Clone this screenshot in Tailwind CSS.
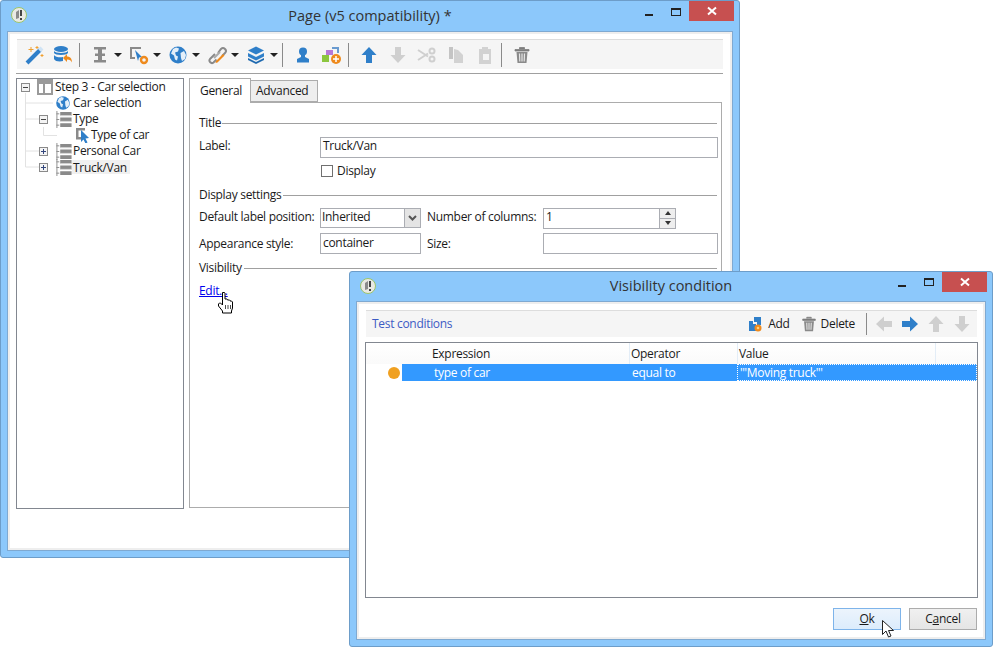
<!DOCTYPE html>
<html lang="en">
  <head>
    <meta charset="UTF-8" />
    <title>Page (v5 compatibility)</title>
    <script src="https://cdn.jsdelivr.net/npm/@tailwindcss/browser@4"></script>
  </head>
  <body class="bg-white">
    <svg class="absolute w-0 h-0">
      <symbol id="app" viewBox="0 0 16 16">
        <circle cx="8" cy="8" r="7.5" fill="#e9e9e4" stroke="#9cc56a" />
        <path d="M5 5l3-2v8l-3 1z" fill="#8a8a8a" />
        <path d="M9 3h2v6H9zM9 11h2v2H9z" fill="#444" />
      </symbol>
      <symbol id="globe" viewBox="0 0 20 20">
        <circle cx="10" cy="10" r="8.500" fill="#2f7fc9" />
        <path d="M5 4l3-1.500 3 1-1 3-3 1 1 3 2 1-1 4-2-1-1-4-3-2zM12.500 8l3.500-2 2 4-1 4-3 2-1-3z" fill="#e4eff9" />
      </symbol>
      <symbol id="rows" viewBox="0 0 18 18">
        <path d="M1.500 0v18M1 3h3M1 9h3M1 15h3" stroke="#8a8a8a" fill="none" />
        <path d="M5 1h12v4H5zM5 7h12v4H5zM5 13h12v4H5z" fill="#8a8a8a" />
        <path d="M5 5h12M5 11h12" stroke="#ddd" />
      </symbol>
      <symbol id="down" viewBox="0 0 20 20">
        <path d="M7 2h6v8h4.500L10 18l-7.500-8H7z" fill="currentColor" />
      </symbol>
      <symbol id="up" viewBox="0 0 20 20">
        <path d="M7 18h6v-8h4.500L10 2l-7.500 8H7z" fill="currentColor" />
      </symbol>
      <symbol id="left" viewBox="0 0 20 20">
        <path d="M18 7v6h-8v4.500L2 10l8-7.500V7z" fill="currentColor" />
      </symbol>
      <symbol id="right" viewBox="0 0 20 20">
        <path d="M2 7v6h8v4.500L18 10l-8-7.500V7z" fill="currentColor" />
      </symbol>
      <symbol id="trash" viewBox="0 0 20 20">
        <path d="M7.500 4V2.500h5V4M3 4.500h14V6H3z" fill="#7d7d7d" stroke="#7d7d7d" stroke-width=".8" />
        <path d="M4.500 7h11l-1 11h-9z" fill="#8a8a8a" />
        <path d="M7.500 8.500l.3 8M10 8.500v8M12.500 8.500l-.3 8" stroke="#e6e6e6" stroke-width="1.200" />
      </symbol>
      <symbol id="close" viewBox="0 0 10 10">
        <path d="M1 1.500l8 7M9 1.500l-8 7" stroke="#fff" stroke-width="2" />
      </symbol>
    </svg>

    <div class="relative w-[994px] h-[647px] overflow-hidden bg-white text-[12px] leading-4 tracking-[-0.3px] text-[#1a1a1a] font-['Open_Sans',sans-serif]">
      <!-- Main window -->
      <div class="absolute left-0 top-0 flex flex-col w-[740px] h-[558px] bg-[#8cc8fb] border border-[#6d9dc9] rounded-[3px]">
        <div class="grid grid-cols-[120px_1fr_120px] h-[30px] shrink-0">
          <div class="pl-[10px] pt-[6px]">
            <svg class="w-4 h-4"><use href="#app" /></svg>
          </div>
          <div class="pt-[3px] text-center text-[14.5px] tracking-normal leading-6 text-[#333]">Page (v5 compatibility) *</div>
          <div class="flex justify-end items-start">
            <div class="w-[8px] h-[2px] mt-[13px] mr-[18px] bg-[#222]"></div>
            <div class="w-[10px] h-[8px] mt-[7px] mr-[8px] border border-t-2 border-[#222]"></div>
            <div class="flex items-center justify-center w-[45px] h-[20px] mr-[5px] bg-[#c75050]">
              <svg class="w-[10px] h-[10px]"><use href="#close" /></svg>
            </div>
          </div>
        </div>
        <div class="flex-1 mx-[6px] mb-[6px] bg-white border border-[#7fa9d1] shadow-[inset_1px_1px_0_1px_#eee,inset_-1px_-1px_0_1px_#eee] pl-[9px] pr-[9px] pt-[7px]">
          <!-- Toolbar -->
          <div class="flex items-center h-[30px] pl-[8px] bg-[#f5f5f5] border-t border-[#ddd]">
            <svg class="w-5 h-5" viewBox="0 0 20 20"><path d="M2 18L15 5" stroke="#2f7fc9" stroke-width="4" /><path d="M14.500 5.500l2.500-2.500" stroke="#cfe3f5" stroke-width="4" /><path d="M6 2v5M3.500 4.500h5M12 1v3M10.500 2.500h3M17 9v3M15.500 10.500h3" stroke="#f0a030" /></svg>
            <svg class="w-5 h-5 ml-[8px]" viewBox="0 0 20 20"><ellipse cx="8" cy="4" rx="7" ry="3" fill="#2f7fc9" /><path d="M1 6c1 2.500 13 2.500 14 0v2c-1 2.500-13 2.500-14 0zM1 10c1 2.500 7 2.500 9 2v4c-3 1-8 .5-9-2z" fill="#2f7fc9" /><path d="M10 13l4-4v2.500c3 0 5 2 5 6-1-2-2-3-5-3V17z" fill="#ee8a1d" /></svg>
            <div class="w-px h-[24px] ml-[6px] bg-[#8a8a8a]"></div>
            <svg class="w-5 h-5 ml-[10px]" viewBox="0 0 20 20"><path d="M4 2h12v2.500h-4v4h3V11h-3v4h4v2.500H4V15h4v-4H5V8.500h3v-4H4z" fill="#8a8a8a" /></svg>
            <div class="w-0 h-0 ml-[4px] border-x-[4px] border-t-[4px] border-x-transparent border-t-[#222]"></div>
            <svg class="w-5 h-5 ml-[7px]" viewBox="0 0 20 20"><path d="M1 2h11v2H3v8h3v2H1z" fill="#8a8a8a" /><path d="M6 5l7 7-3 .5-1 3.500z" fill="#2f7fc9" /><circle cx="15" cy="15" r="3" fill="none" stroke="#ee8a1d" stroke-width="2.400" /></svg>
            <div class="w-0 h-0 ml-[4px] border-x-[4px] border-t-[4px] border-x-transparent border-t-[#222]"></div>
            <svg class="w-5 h-5 ml-[7px]"><use href="#globe" /></svg>
            <div class="w-0 h-0 ml-[4px] border-x-[4px] border-t-[4px] border-x-transparent border-t-[#222]"></div>
            <svg class="w-5 h-5 ml-[7px]" viewBox="0 0 20 20"><path d="M8 9l-5 5a2.500 2.500 0 0 0 3.500 3.500l3-3M11 8l3-4a2.500 2.500 0 0 1 4 4l-3 3" fill="none" stroke="#8a8a8a" stroke-width="2" /><path d="M7 13l6-6" stroke="#aaa" stroke-width="2" /><path d="M9 16l7-7 1.500 1.500-7 7-2 .5z" fill="#ee8a1d" /></svg>
            <div class="w-0 h-0 ml-[4px] border-x-[4px] border-t-[4px] border-x-transparent border-t-[#222]"></div>
            <svg class="w-5 h-5 ml-[7px]" viewBox="0 0 20 20"><path d="M10 1.500l8 4-8 4-8-4z" fill="#2f7fc9" /><path d="M2 8v3.500l8 4 8-4V8l-8 4z" fill="#2f7fc9" /><path d="M2 13v2l8 4 8-4v-2l-8 4z" fill="#1f6ab0" /></svg>
            <div class="w-0 h-0 ml-[4px] border-x-[4px] border-t-[4px] border-x-transparent border-t-[#222]"></div>
            <div class="w-px h-[24px] ml-[4px] bg-[#8a8a8a]"></div>
            <svg class="w-5 h-5 ml-[10px]" viewBox="0 0 20 20"><circle cx="10" cy="6.500" r="4" fill="#2f7fc9" /><path d="M8 10h4v2l4 2v3.500H4V14l4-2z" fill="#2f7fc9" /></svg>
            <svg class="w-5 h-5 ml-[8px]" viewBox="0 0 20 20"><path d="M5 5h7v5H5z" fill="#b678d8" /><path d="M11 2h7v6h-2V4h-5z" fill="#6a9bd0" /><path d="M1 10h7v7H1z" fill="#8cc63f" /><circle cx="15" cy="14" r="5" fill="#ee8a1d" /><path d="M15 11v6M12 14h6" stroke="#fff" stroke-width="1.500" /></svg>
            <div class="w-px h-[24px] ml-[7px] bg-[#8a8a8a]"></div>
            <svg class="w-5 h-5 ml-[10px] text-[#2f7fc9]"><use href="#up" /></svg>
            <svg class="w-5 h-5 ml-[9px] text-[#cfcfcf]"><use href="#down" /></svg>
            <svg class="w-5 h-5 ml-[9px]" viewBox="0 0 20 20"><path d="M1 5l10 6.500M1 15l10-6.500" stroke="#cfcfcf" stroke-width="2" /><circle cx="15" cy="6" r="2.500" fill="none" stroke="#cfcfcf" stroke-width="2" /><circle cx="15" cy="14" r="2.500" fill="none" stroke="#cfcfcf" stroke-width="2" /></svg>
            <svg class="w-5 h-5 ml-[9px]" viewBox="0 0 20 20"><path d="M3 2h4v12H3z" fill="#c4c4c4" /><path d="M8 4l4 1 5 5v8H8z" fill="#d2d2d2" /></svg>
            <svg class="w-5 h-5 ml-[9px]" viewBox="0 0 20 20"><path d="M4 4h3V2h6v2h3v15H4z" fill="#d2d2d2" /><path d="M8 9h6v6H8z" fill="#f5f5f5" /></svg>
            <div class="w-px h-[24px] ml-[6px] bg-[#8a8a8a]"></div>
            <svg class="w-5 h-5 ml-[10px]"><use href="#trash" /></svg>
          </div>
          <div class="h-px mt-[4px] -ml-px bg-[#a0a0a0]"></div>

          <div class="flex gap-[5px] mt-[4px] -ml-px">
            <!-- Tree -->
            <div class="relative w-[168px] h-[431px] bg-white border border-[#828790]">
              <svg class="absolute left-0 top-0 w-[60px] h-[100px]"><path d="M8.500 14v74M8.500 24H36M8.500 40H24M8.500 72H24M8.500 88H24M26.500 48v8.500H40" stroke="#e2e2e2" fill="none" /></svg>
              <div class="relative flex items-center h-4 pl-[4px]">
                <div class="flex items-center justify-center w-[9px] h-[9px] bg-[#f4f4f4] border border-[#8a8a8a]"><div class="w-[5px] h-px bg-[#444]"></div></div>
                <svg class="w-[16px] h-[16px] ml-[7px]" viewBox="0 0 16 16"><path d="M1 1h14v14H1z" fill="#fff" stroke="#9a9a9a" stroke-width="2" /><path d="M1 1h14v4H1zM6 5h2v10H6z" fill="#9a9a9a" /></svg>
                <span class="ml-[2px] whitespace-nowrap">Step 3 - Car selection</span>
              </div>
              <div class="relative flex items-center h-4 pl-[38px]">
                <svg class="w-4 h-4"><use href="#globe" /></svg>
                <span class="ml-[2px] whitespace-nowrap">Car selection</span>
              </div>
              <div class="relative flex items-center h-4 pl-[22px]">
                <div class="flex items-center justify-center w-[9px] h-[9px] bg-[#f4f4f4] border border-[#8a8a8a]"><div class="w-[5px] h-px bg-[#444]"></div></div>
                <svg class="w-[18px] h-[17px] ml-[7px]"><use href="#rows" /></svg>
                <span>Type</span>
              </div>
              <div class="relative flex items-center h-4 pl-[58px]">
                <svg class="w-4 h-4" viewBox="0 0 16 16"><path d="M1 1h9v2.500H3.500V10H6v2.500H1z" fill="#8a8a8a" /><path d="M6 3l8 8-3.500.5 2 4-2 1-2-4L6 15z" fill="#2f7fc9" /></svg>
                <span class="whitespace-nowrap">Type of car</span>
              </div>
              <div class="relative flex items-center h-4 pl-[22px]">
                <div class="relative flex items-center justify-center w-[9px] h-[9px] bg-[#f4f4f4] border border-[#8a8a8a]"><div class="w-[5px] h-px bg-[#33467c]"></div><div class="absolute w-px h-[5px] bg-[#33467c]"></div></div>
                <svg class="w-[18px] h-[17px] ml-[7px]"><use href="#rows" /></svg>
                <span class="whitespace-nowrap">Personal Car</span>
              </div>
              <div class="relative flex items-center h-4 pl-[22px]">
                <div class="relative flex items-center justify-center w-[9px] h-[9px] bg-[#f4f4f4] border border-[#8a8a8a]"><div class="w-[5px] h-px bg-[#33467c]"></div><div class="absolute w-px h-[5px] bg-[#33467c]"></div></div>
                <svg class="w-[18px] h-[17px] ml-[7px]"><use href="#rows" /></svg>
                <span class="-ml-px w-[58px] h-[14px] pl-px leading-[16px] bg-[#f0f0f0] whitespace-nowrap">Truck/Van</span>
              </div>
            </div>

            <!-- Tabs and form -->
            <div class="flex flex-col w-[533px] h-[430px]">
              <div class="flex items-end h-[24px] shrink-0">
                <div class="relative z-10 w-[62px] h-[25px] -mb-px pl-[10px] pt-[4px] bg-white border border-b-0 border-[#acacac]">General</div>
                <div class="w-[67px] h-[22px] pl-[5px] pt-[2px] bg-[#eee] border border-l-0 border-[#acacac]">Advanced</div>
              </div>
              <div class="flex-1 pl-[9px] pr-[3px] pt-[12px] border border-[#acacac]">
                <div class="flex items-center gap-[1px] h-4 mr-[1px]"><span>Title</span><div class="flex-1 h-px bg-[#a0a0a0]"></div></div>
                <div class="flex items-start mt-[6px] h-[21px]">
                  <span class="w-[121px] mt-px">Label:</span>
                  <div class="flex-1 h-full pl-[2px] leading-[16px] border border-[#abadb3]">Truck/Van</div>
                </div>
                <div class="flex items-start mt-[7px] h-[13px] pl-[122px]">
                  <div class="w-[12px] h-[12px] bg-white border border-[#707070]"></div>
                  <span class="ml-[4px] -mt-[2px]">Display</span>
                </div>
                <div class="flex items-center gap-[2px] h-4 mt-[9px] mr-[1px]"><span>Display settings</span><div class="flex-1 h-px bg-[#a0a0a0]"></div></div>
                <div class="grid grid-cols-[121px_101px_122px_175px] grid-rows-[20px_21px] gap-y-[5px] items-center mt-[5px]">
                  <span class="pb-[2px] whitespace-nowrap">Default label position:</span>
                  <div class="flex h-[20px] border border-[#abadb3]">
                    <span class="flex-1 pl-px leading-[16px]">Inherited</span>
                    <div class="flex items-center justify-center w-[16px] bg-[#e4e4e4] border-l border-[#abadb3]">
                      <svg class="w-[9px] h-[6px]" viewBox="0 0 9 6"><path d="M1 1l3.500 3.500L8 1" fill="none" stroke="#555" stroke-width="2" /></svg>
                    </div>
                  </div>
                  <span class="pl-[6px] pb-[2px] whitespace-nowrap">Number of columns:</span>
                  <div class="flex w-[133px] h-[21px] border border-[#abadb3]">
                    <span class="flex-1 pl-[2px] leading-[16px]">1</span>
                    <div class="flex flex-col w-[16px] bg-[#eee] border-l border-[#abadb3]">
                      <div class="flex flex-1 items-center justify-center border-b border-[#abadb3]"><div class="w-0 h-0 border-x-[3px] border-b-[4px] border-x-transparent border-b-[#333]"></div></div>
                      <div class="flex flex-1 items-center justify-center"><div class="w-0 h-0 border-x-[3px] border-t-[4px] border-x-transparent border-t-[#333]"></div></div>
                    </div>
                  </div>
                  <span>Appearance style:</span>
                  <div class="h-[21px] pl-[2px] leading-[17px] border border-[#abadb3]">container</div>
                  <span class="pl-[6px]">Size:</span>
                  <div class="h-[21px] border border-[#abadb3]"></div>
                </div>
                <div class="flex items-center gap-[2px] h-4 mt-[6px] mr-[1px]"><span>Visibility</span><div class="flex-1 h-px bg-[#a0a0a0]"></div></div>
                <a class="block w-fit mt-[7px] text-[#0000ee] underline" href="#">Edit...</a>
              </div>
            </div>
          </div>
        </div>
      </div>

      <!-- Hand cursor -->
      <svg class="absolute left-[216px] top-[291px] w-[20px] h-[24px]" viewBox="0 0 20 24"><path d="M6.500 1.500h2l.5.500v6h2l.5.500v.5h2l.5.500v.5h1.500l1 1v6l-1 3v2h-9v-2l-4-5v-2l1-1h1l2 2v-10z" fill="#fff" stroke="#000" /><path d="M9.500 14v4M12 14v4M14.500 14v4" stroke="#000" stroke-width=".7" /></svg>

      <!-- Visibility condition dialog -->
      <div class="absolute left-[349px] top-[271px] flex flex-col w-[644px] h-[376px] bg-[#8cc8fb] border border-[#6d9dc9] rounded-[3px]">
        <div class="grid grid-cols-[120px_1fr_120px] h-[29px] shrink-0">
          <div class="pl-[10px] pt-[6px]">
            <svg class="w-4 h-4"><use href="#app" /></svg>
          </div>
          <div class="pt-[2px] text-center text-[14.5px] tracking-normal leading-6 text-[#333]">Visibility condition</div>
          <div class="flex justify-end items-start">
            <div class="w-[8px] h-[2px] mt-[13px] mr-[18px] bg-[#222]"></div>
            <div class="w-[10px] h-[8px] mt-[6px] mr-[8px] border border-t-2 border-[#222]"></div>
            <div class="flex items-center justify-center w-[45px] h-[20px] mr-[5px] bg-[#c75050]">
              <svg class="w-[10px] h-[10px]"><use href="#close" /></svg>
            </div>
          </div>
        </div>
        <div class="flex-1 mx-[6px] mb-[6px] bg-white border border-[#7fa9d1] shadow-[inset_1px_1px_0_1px_#eee,inset_-1px_-1px_0_1px_#eee] pl-[9px] pr-[8px] pt-[8px]">
          <div class="flex items-center h-[27px] pl-[6px] bg-[#f5f5f5] border-t border-[#ddd]">
            <span class="text-[#3d5bc4]">Test conditions</span>
            <svg class="w-[14px] h-[16px] ml-auto" viewBox="0 0 14 16"><path d="M6 1h7v8H9V6H6z" fill="#2f7fc9" /><path d="M1 5h4v3h3v7H1z" fill="#2f7fc9" /><circle cx="10" cy="12" r="3.500" fill="#ee8a1d" /><circle cx="10" cy="12" r="1.300" fill="#ffd27a" /></svg>
            <span class="ml-[6px]">Add</span>
            <svg class="w-[18px] h-[18px] ml-[10px]"><use href="#trash" /></svg>
            <span class="ml-[3px]">Delete</span>
            <div class="w-px h-[22px] ml-[11px] bg-[#8a8a8a]"></div>
            <svg class="w-5 h-5 ml-[7px] text-[#cfcfcf]"><use href="#left" /></svg>
            <svg class="w-5 h-5 ml-[6px] text-[#2f7fc9]"><use href="#right" /></svg>
            <svg class="w-5 h-5 ml-[6px] text-[#cfcfcf]"><use href="#up" /></svg>
            <svg class="w-5 h-5 ml-[6px] mr-[5px] text-[#cfcfcf]"><use href="#down" /></svg>
          </div>
          <!-- Conditions table -->
          <div class="-mx-px mt-[5px] h-[256px] border border-[#828790]">
            <div class="grid grid-cols-[263px_108px_198px_1fr] h-[21px] bg-gradient-to-b from-white to-[#fafafa]">
              <span class="pl-[66px] leading-[21px]">Expression</span>
              <span class="pl-px leading-[21px] border-l border-[#e3edf7]">Operator</span>
              <span class="pl-px leading-[21px] border-l border-[#e3edf7]">Value</span>
              <span class="border-l border-[#e3edf7]"></span>
            </div>
            <div class="flex h-[17px]">
              <div class="flex items-center justify-end w-[36px] pr-[2px]"><div class="w-[12px] h-[12px] rounded-full bg-[#f0a020]"></div></div>
              <div class="flex flex-1 text-white bg-[#3399ff] leading-[17px]">
                <span class="w-[227px] pl-[32px]">type of car</span>
                <span class="w-[108px] pl-[3px]">equal to</span>
                <span class="flex-1 pl-[2px] leading-[15px] border border-dotted border-white">'"Moving truck"'</span>
              </div>
            </div>
          </div>
          <div class="flex justify-end gap-[8px] mt-[10px]">
            <div class="flex items-center justify-center w-[68px] h-[22px] bg-gradient-to-b from-[#ecf4fc] to-[#dcecfc] border border-[#7eb4ea]"><span class="underline">O</span>k</div>
            <div class="flex items-center justify-center w-[68px] h-[22px] bg-gradient-to-b from-[#f0f0f0] to-[#e5e5e5] border border-[#acacac]">C<span class="underline">a</span>ncel</div>
          </div>
        </div>
      </div>

      <!-- Arrow cursor -->
      <svg class="absolute left-[881px] top-[619px] w-[16px] h-[20px]" viewBox="0 0 16 20"><path d="M1.500 1.500v14l3.500-3.500 2.500 6 2.500-1-2.500-5.500h5z" fill="#fff" stroke="#222" /></svg>
    </div>
  </body>
</html>
